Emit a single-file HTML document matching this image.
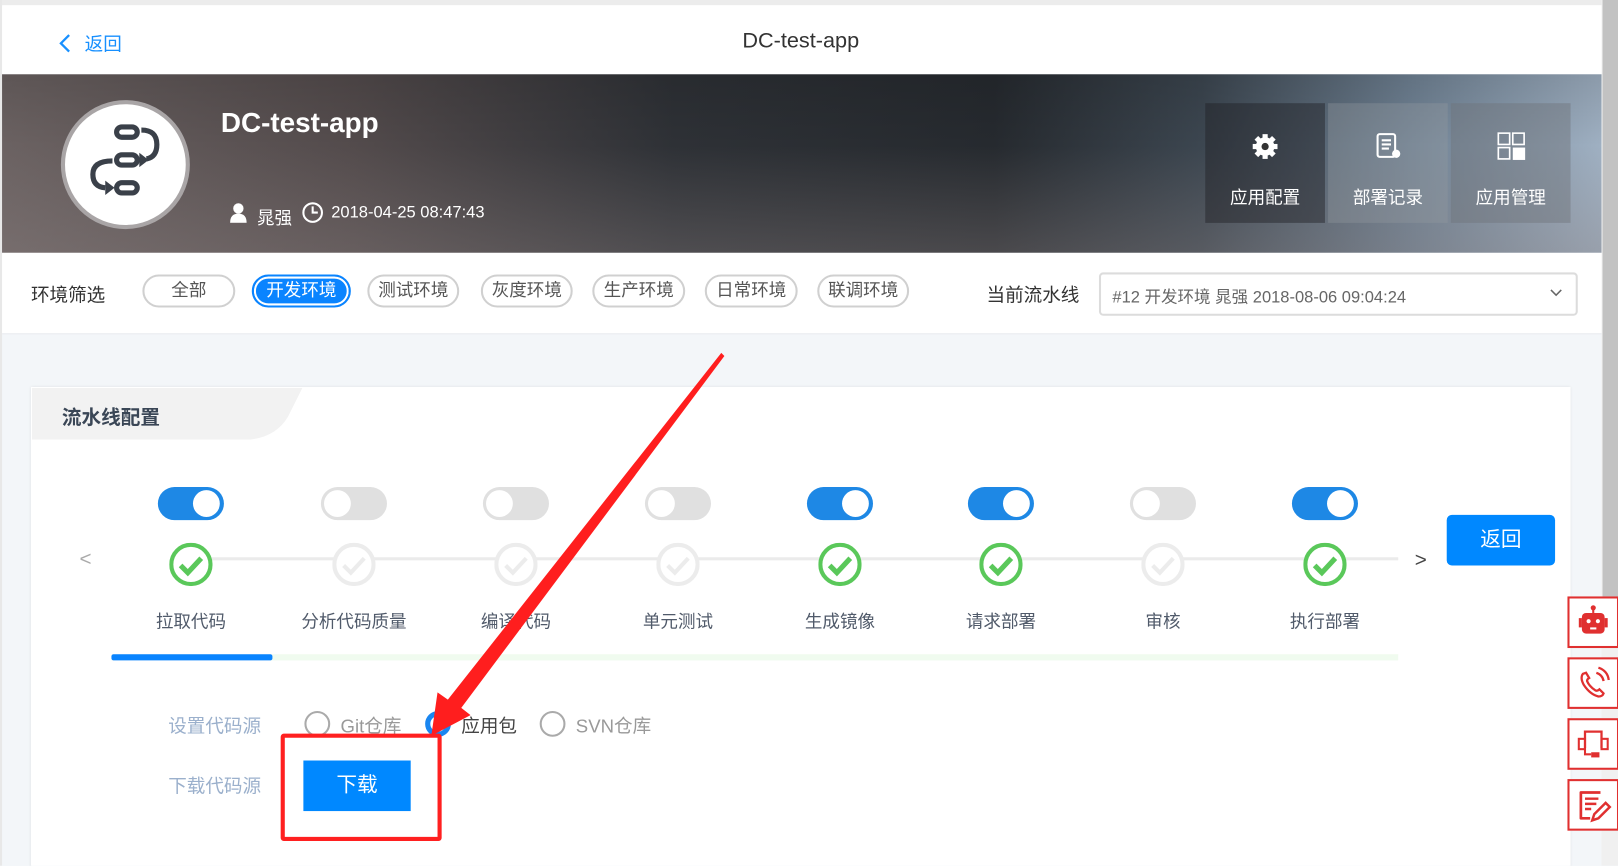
<!DOCTYPE html>
<html><head><meta charset="utf-8"><style>
html,body{margin:0;padding:0;width:1618px;height:866px;overflow:hidden;background:#f3f6f9;}
#w{position:absolute;left:0;top:0;width:1568px;height:839px;transform:scale(1.0319);transform-origin:0 0;font-family:"Liberation Sans","Noto Sans CJK SC",sans-serif;background:#f3f6f9;overflow:hidden}
.a{position:absolute}
.pill{position:absolute;top:266px;height:28px;border:2px solid #d0d0d0;border-radius:16px;font-size:17px;color:#555;text-align:center;line-height:28px;background:#fff}
.tg{position:absolute;top:472px;width:64px;height:32px;border-radius:16px;background:#e0e0e0}
.tg i{position:absolute;top:3px;width:26px;height:26px;border-radius:50%;background:#fff}
.tg.on{background:#1e88e5}.tg.on i{right:4px}.tg.off i{left:3px}
.ck{position:absolute;top:526px;width:42px;height:42px}
.lb{position:absolute;top:588px;width:160px;text-align:center;font-size:17px;color:#505a6a}
.hb{position:absolute;top:100px;width:116px;height:116px;background:rgba(40,44,50,.35);color:#fff;text-align:center;font-size:17px}
.hb span{position:absolute;left:0;right:0;top:77px}
.sb{position:absolute;left:1519px;width:46px;height:46px;border:2px solid #e03030;background:#fff}
</style></head><body><div id="w">
<div class="a" style="left:0;top:0;width:1552px;height:72px;background:#fff;border-top:5px solid #ececec;box-sizing:border-box"></div>
<div class="a" style="left:0;top:0;width:2px;height:839px;background:#e8e8e8"></div>
<svg class="a" style="left:56px;top:32px" width="14" height="20"><path d="M11 2 L3 10 L11 18" fill="none" stroke="#1890ff" stroke-width="2.2"/></svg>
<div class="a" style="left:82px;top:29px;font-size:18px;color:#1890ff">返回</div>
<div class="a" style="left:0;width:1552px;top:28px;text-align:center;font-size:21px;color:#333">DC-test-app</div>
<div class="a" style="left:1552px;top:0;width:16px;height:839px;background:#f0f0f0"></div>
<div class="a" style="left:1553px;top:0;width:15px;height:620px;background:#c2c2c2"></div>
<!-- banner -->
<div class="a" style="left:2px;top:72px;width:1550px;height:173px;background:linear-gradient(90deg,#6b6262 0%,#534b4c 22%,#2e3136 42%,#262a2f 62%,#3c4650 75%,#6f8193 88%,#9fb0c2 100%)"></div>
<div class="a" style="left:2px;top:72px;width:1550px;height:173px;background:linear-gradient(180deg,rgba(0,0,0,.12),rgba(255,255,255,.0) 40%,rgba(140,130,130,.35) 100%)"></div>
<div class="a" style="left:59px;top:97px;width:117px;height:117px;border-radius:50%;background:#fff;border:4px solid #a9a5a6"></div>
<svg class="a" style="left:80px;top:118px" width="82" height="82" viewBox="0 0 82 82"><g fill="none" stroke="#3a4049" stroke-width="5"><rect x="33" y="5" width="20" height="10" rx="5"/><rect x="33" y="32" width="20" height="10" rx="5"/><rect x="33" y="59" width="20" height="10" rx="5"/><path d="M57 8 Q72 8 72 22 Q72 34 62 36"/><path d="M29 38 Q10 38 10 51 Q10 63 22 64"/></g><path d="M55 30 L64 37 L55 44Z M22 57 L31 64 L22 71Z" fill="#3a4049"/></svg>
<div class="a" style="left:214px;top:104px;font-size:27px;font-weight:bold;color:#fff">DC-test-app</div>
<svg class="a" style="left:222px;top:196px" width="18" height="20"><circle cx="9" cy="6" r="5" fill="#fff"/><path d="M1 20 Q1 11 9 11 Q17 11 17 20Z" fill="#fff"/></svg>
<div class="a" style="left:249px;top:197px;font-size:17px;color:#fff">晁强</div>
<svg class="a" style="left:292px;top:195px" width="22" height="22"><circle cx="11" cy="11" r="9" fill="none" stroke="#fff" stroke-width="2"/><path d="M11 5 V11 H16" fill="none" stroke="#fff" stroke-width="2"/></svg>
<div class="a" style="left:321px;top:198px;font-size:16px;color:#fff">2018-04-25 08:47:43</div>
<div class="hb" style="left:1168px;background:rgba(30,32,36,.45)"><svg class="a" style="left:45px;top:29px" width="26" height="26" viewBox="0 0 26 26"><g fill="#fff"><circle cx="13" cy="13" r="9"/><rect x="10.5" y="1" width="5" height="24"/><rect x="1" y="10.5" width="24" height="5"/><rect x="10.5" y="1" width="5" height="24" transform="rotate(45 13 13)"/><rect x="10.5" y="1" width="5" height="24" transform="rotate(-45 13 13)"/></g><circle cx="13" cy="13" r="3.5" fill="#333"/></svg><span>应用配置</span></div>
<div class="hb" style="left:1287px;background:rgba(150,155,160,.35)"><svg class="a" style="left:46px;top:28px" width="26" height="28"><rect x="2" y="2" width="17" height="22" rx="2" fill="none" stroke="#fff" stroke-width="2"/><path d="M6 8H15M6 12H15M6 16H13" stroke="#fff" stroke-width="2"/><circle cx="20" cy="21" r="4" fill="#fff"/></svg><span>部署记录</span></div>
<div class="hb" style="left:1406px;background:rgba(110,115,122,.45)"><svg class="a" style="left:45px;top:28px" width="28" height="28"><g fill="none" stroke="#fff" stroke-width="1.6"><rect x="1" y="1" width="11" height="11"/><rect x="15" y="1" width="11" height="11"/><rect x="1" y="15" width="11" height="11"/></g><rect x="15" y="15" width="12" height="12" fill="#fff"/></svg><span>应用管理</span></div>
<!-- filter -->
<div class="a" style="left:2px;top:245px;width:1550px;height:78px;background:#fff;border-bottom:1px solid #e6e9ee"></div>
<div class="a" style="left:30px;top:272px;font-size:18px;color:#333">环境筛选</div>
<div class="pill" style="left:138px;width:86px">全部</div>
<div class="pill" style="left:244px;width:92px;background:#0a84ff;color:#fff;border-color:#0a84ff;box-shadow:inset 0 0 0 2px #fff">开发环境</div>
<div class="pill" style="left:356px;width:85px">测试环境</div>
<div class="pill" style="left:466px;width:85px">灰度环境</div>
<div class="pill" style="left:574px;width:86px">生产环境</div>
<div class="pill" style="left:683px;width:86px">日常环境</div>
<div class="pill" style="left:792px;width:85px">联调环境</div>
<div class="a" style="left:956px;top:272px;font-size:18px;color:#333">当前流水线</div>
<div class="a" style="left:1065px;top:264px;width:460px;height:38px;border:2px solid #dcdcdc;border-radius:4px;background:#fff"></div>
<div class="a" style="left:1078px;top:274px;font-size:16px;color:#666">#12 开发环境 晁强 2018-08-06 09:04:24</div>
<svg class="a" style="left:1501px;top:279px" width="14" height="10"><path d="M2 2 L7 7 L12 2" fill="none" stroke="#666" stroke-width="1.5"/></svg>
<!-- card -->
<div class="a" style="left:30px;top:375px;width:1492px;height:470px;background:#fff;box-shadow:0 0 3px rgba(0,0,0,.1)"></div>
<svg class="a" style="left:31px;top:376px" width="262" height="50"><path d="M0 0 H262 L248 28 Q236 48 210 50 H0Z" fill="#f2f2f2"/></svg>
<div class="a" style="left:60px;top:390px;font-size:19px;font-weight:bold;color:#3a4656">流水线配置</div>
<div class="a" style="left:77px;top:531px;font-size:20px;color:#aaa">&lt;</div>
<div class="a" style="left:1371px;top:532px;font-size:20px;color:#444">&gt;</div>
<div class="a" style="left:205px;top:540px;width:1150px;height:3px;background:#ebebeb"></div>
<div class="tg on" style="left:153px"><i></i></div>
<div class="tg off" style="left:311px"><i></i></div>
<div class="tg off" style="left:468px"><i></i></div>
<div class="tg off" style="left:625px"><i></i></div>
<div class="tg on" style="left:782px"><i></i></div>
<div class="tg on" style="left:938px"><i></i></div>
<div class="tg off" style="left:1095px"><i></i></div>
<div class="tg on" style="left:1252px"><i></i></div>
<svg width="0" height="0" style="position:absolute"><defs><g id="g"><circle cx="21" cy="21" r="19" fill="#fff" stroke="#5ac85a" stroke-width="4"/><path d="M11 22 L18 29 L31 15" fill="none" stroke="#5ac85a" stroke-width="5"/></g><g id="x"><circle cx="21" cy="21" r="19" fill="#fff" stroke="#ececec" stroke-width="4"/><path d="M11 22 L18 29 L31 15" fill="none" stroke="#ececec" stroke-width="4"/></g></defs></svg>
<svg class="ck" style="left:164px"><use href="#g"/></svg>
<svg class="ck" style="left:322px"><use href="#x"/></svg>
<svg class="ck" style="left:479px"><use href="#x"/></svg>
<svg class="ck" style="left:636px"><use href="#x"/></svg>
<svg class="ck" style="left:793px"><use href="#g"/></svg>
<svg class="ck" style="left:949px"><use href="#g"/></svg>
<svg class="ck" style="left:1106px"><use href="#x"/></svg>
<svg class="ck" style="left:1263px"><use href="#g"/></svg>
<div class="lb" style="left:105px">拉取代码</div>
<div class="lb" style="left:263px">分析代码质量</div>
<div class="lb" style="left:420px">编译代码</div>
<div class="lb" style="left:577px">单元测试</div>
<div class="lb" style="left:734px">生成镜像</div>
<div class="lb" style="left:890px">请求部署</div>
<div class="lb" style="left:1047px">审核</div>
<div class="lb" style="left:1204px">执行部署</div>
<div class="a" style="left:1402px;top:499px;width:105px;height:49px;border-radius:5px;background:#0088ff;color:#fff;font-size:20px;text-align:center;line-height:49px">返回</div>
<div class="a" style="left:108px;top:634px;width:1247px;height:6px;background:#f0fbef"></div>
<div class="a" style="left:108px;top:634px;width:156px;height:6px;background:#0a84ff;border-radius:2px"></div>
<div class="a" style="left:163px;top:690px;font-size:18px;color:#9bb0cc">设置代码源</div>
<div class="a" style="left:295px;top:689px;width:21px;height:21px;border:2px solid #aaa;border-radius:50%"></div>
<div class="a" style="left:330px;top:690px;font-size:18px;color:#999">Git仓库</div>
<div class="a" style="left:412px;top:689px;width:15px;height:15px;border:5px solid #1a86f0;border-radius:50%"></div>
<div class="a" style="left:447px;top:690px;font-size:18px;color:#444">应用包</div>
<div class="a" style="left:523px;top:689px;width:21px;height:21px;border:2px solid #aaa;border-radius:50%"></div>
<div class="a" style="left:558px;top:690px;font-size:18px;color:#999">SVN仓库</div>
<div class="a" style="left:163px;top:748px;font-size:18px;color:#9bb0cc">下载代码源</div>
<div class="a" style="left:294px;top:737px;width:104px;height:49px;background:#0088ff;color:#fff;font-size:20px;text-align:center;line-height:49px">下载</div>
<div class="a" style="left:272px;top:711px;width:148px;height:96px;border:4px solid #ff2020;border-radius:3px"></div>
<svg class="a" style="left:0;top:0" width="1568" height="839"><path d="M699 342 L702 345 L447 686 L456 693 L418 713 L424 671 L434 678Z" fill="#ff1e1e"/></svg>
<!-- side -->
<div class="sb" style="top:578px"><svg width="46" height="46"><g fill="#e03030"><circle cx="23" cy="9" r="2.5"/><rect x="22" y="10" width="2" height="4"/><rect x="12" y="14" width="22" height="20" rx="4"/><rect x="9" y="19" width="3" height="9"/><rect x="34" y="19" width="3" height="9"/></g><circle cx="18.5" cy="22" r="2" fill="#fff"/><circle cx="27.5" cy="22" r="2" fill="#fff"/><rect x="20" y="28" width="6" height="2" fill="#fff"/></svg></div>
<div class="sb" style="top:637px"><svg width="46" height="46"><path d="M13 14 Q10 18 14 25 Q20 34 28 36 Q32 36 33 33 L29 29 Q27 31 25 30 Q19 26 17 21 Q17 19 19 18 L16 13Z" fill="none" stroke="#e03030" stroke-width="2.2"/><path d="M26 13 Q32 15 33 21 M28 8 Q37 11 38 20" fill="none" stroke="#e03030" stroke-width="2.2"/></svg></div>
<div class="sb" style="top:696px"><svg width="46" height="46"><path d="M15 27 V11 H31 V27" fill="none" stroke="#e03030" stroke-width="2.2"/><rect x="9" y="18" width="6" height="10" fill="none" stroke="#e03030" stroke-width="2"/><rect x="31" y="18" width="6" height="10" fill="none" stroke="#e03030" stroke-width="2"/><path d="M15 28 V33 H21" fill="none" stroke="#e03030" stroke-width="2"/><rect x="21" y="31" width="8" height="5" fill="#e03030"/></svg></div>
<div class="sb" style="top:755px"><svg width="46" height="46"><path d="M30 11 H11 V36 H20" fill="none" stroke="#e03030" stroke-width="2.6" stroke-linejoin="round"/><path d="M15 17 H28 M15 22 H26 M15 27 H21" stroke="#e03030" stroke-width="2.4"/><path d="M35 21 L24 32 L22 38 L28 36 L39 25Z" fill="none" stroke="#e03030" stroke-width="2.4"/></svg></div>
</div></body></html>
